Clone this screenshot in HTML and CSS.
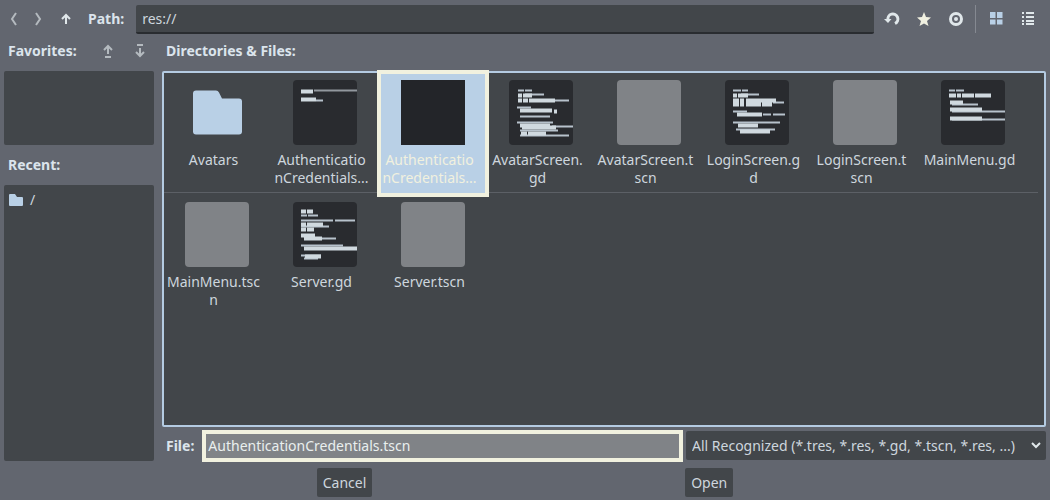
FILE: index.html
```html
<!DOCTYPE html>
<html lang="en">
<head>
<meta charset="utf-8">
<title>Open a File</title>
<link rel="stylesheet" href="styles.css">
</head>
<body>
<form class="dialog">
  <div class="toolbar">
    <div class="nav">
      <button type="button" class="tool dim" aria-label="Back"><svg viewBox="0 0 16 16"><path class="line" d="M10 2 6 8l4 6"/></svg></button>
      <button type="button" class="tool dim" aria-label="Forward"><svg viewBox="0 0 16 16"><path class="line" d="m6 2 4 6-4 6"/></svg></button>
      <button type="button" class="tool tool-up" aria-label="Parent folder"><svg viewBox="0 0 16 16"><path class="line" d="M8 13V5M4 8l4-4 4 4"/></svg></button>
    </div>
    <label class="heading path-label" for="path">Path:</label>
    <input class="field path" id="path" type="text" value="res://">
    <div class="actions">
      <button type="button" class="tool" aria-label="Refresh"><svg viewBox="0 0 16 16"><path class="line heavy" d="M4 9a5 5 0 1 1 7 3.500"/><path class="fill" d="M0 8h7.500L4 12z"/></svg></button>
      <button type="button" class="tool" aria-label="Favorite"><svg viewBox="0 0 16 16"><path class="cream" d="m8 1 2 5 5 .5-4 3.500 1.500 5L8 12.500 3.500 15 5 10 1 6.500 6 6z"/></svg></button>
      <button type="button" class="tool" aria-label="Show hidden files"><svg viewBox="0 0 16 16"><circle class="line heavy" cx="8" cy="8" r="5.500"/><circle class="fill" cx="8" cy="8" r="2"/></svg></button>
    </div>
    <div class="views">
      <button type="button" class="tool" aria-label="Thumbnails"><svg viewBox="0 0 16 16"><path class="blue" d="M2 1h5.500v6H2zM9 1h5.500v6H9zM2 8.500h5.500v5H2zM9 8.500h5.500v5H9z"/></svg></button>
      <button type="button" class="tool" aria-label="List"><svg viewBox="0 0 16 16"><path class="fill" d="M2 1h2v2H2zM6 1h8v2H6zM2 5h2v2H2zM6 5h8v2H6zM2 9h2v2H2zM6 9h8v2H6zM2 12h2v2H2zM6 12h8v2H6z"/></svg></button>
    </div>
  </div>

  <div class="main">
    <aside class="side">
      <div class="head">
        <h2 class="heading grow">Favorites:</h2>
        <button type="button" class="tool dim" aria-label="Move up"><svg viewBox="0 0 16 16"><path class="line" d="M8 11V3M4 7l4-4 4 4M5 14h6"/></svg></button>
        <button type="button" class="tool dim" aria-label="Move down"><svg viewBox="0 0 16 16"><path class="line" d="M8 5v8M4 9l4 4 4-4M5 2h6"/></svg></button>
      </div>
      <div class="panel favorites"></div>
      <div class="head recent-head"><h2 class="heading">Recent:</h2></div>
      <ul class="panel recent">
        <li><svg class="mini" viewBox="0 0 16 16"><path class="blue" d="M1 3q0-1 1-1h5l2 3h5q1 0 1 1v7q0 1-1 1H2q-1 0-1-1z"/></svg>/</li>
      </ul>
    </aside>

    <section class="content">
      <div class="head"><h2 class="heading">Directories &amp; Files:</h2></div>
      <div class="files">
        <ul class="row first">
          <li class="file"><svg class="thumb" viewBox="0 0 64 64"><path class="blue" d="M8 13q0-3 3-3h20q2 0 3 2l3 6h17q3 0 3 3v30q0 3-3 3H11q-3 0-3-3z"/></svg><span class="name">Avatars</span></li>
          <li class="file"><svg class="thumb code" viewBox="0 0 64 64"><path class="thick" d="M8 11h12M8 19h15"/><path d="M23 20h7"/><path class="thin" d="M21 10h43"/></svg><span class="name">Authenticatio<br>nCredentials...</span></li>
          <li class="file selected"><span class="thumb black"></span><span class="name">Authenticatio<br>nCredentials...</span></li>
          <li class="file"><svg class="thumb code" viewBox="0 0 64 64"><path d="M9 10h6m1 0h7M16 14h19M46 20h14M8 27h14M11 36h30M8 42h36M43 46h21M11 50h38M11 55h49"/><path class="thick" d="M9 15h4m1 0h9M9 20h4m1 0h5m1 0h26M11 30h32m2 1h3M11 45h30M13 47h34M12 53h6m1 0h18"/></svg><span class="name">AvatarScreen.<br>gd</span></li>
          <li class="file"><span class="thumb gray"></span><span class="name">AvatarScreen.t<br>scn</span></li>
          <li class="file"><svg class="thumb code" viewBox="0 0 64 64"><path d="M8 10h8m1 0h6M16 14h18M48 22h11M8 31h14M38 34h8m2 0h12M8 42h47M11 49h39"/><path class="thick" d="M8 15h4m1 0h10M8 20h6m1 0h4m2 0h30M8 24h6m1 0h4m2 0h15m1 0h10M12 34h25M13 45h20M15 51h30"/></svg><span class="name">LoginScreen.g<br>d</span></li>
          <li class="file"><span class="thumb gray"></span><span class="name">LoginScreen.t<br>scn</span></li>
          <li class="file"><svg class="thumb code" viewBox="0 0 64 64"><path d="M8 10h6m1 0h8M11 24h26M11 31h53M11 39h53"/><path class="thick" d="M8 15h7m1 0h4m1 0h12m1 0h16M9 22h13M9 29h32M9 38h32"/></svg><span class="name">MainMenu.gd</span></li>
        </ul>
        <ul class="row">
          <li class="file"><span class="thumb gray"></span><span class="name">MainMenu.tsc<br>n</span></li>
          <li class="file"><svg class="thumb code" viewBox="0 0 64 64"><path d="M8 13h6m1 0h10M8 18h32m2 0h20M8 24h28M11 36h32M8 43h42M8 53h20M11 56h14"/><path class="thick" d="M8 9h5m1 0h6M8 22h5m1 0h16M8 27h5m1 0h7M8 33h14M11 36h18M11 46h53M12 54h16"/></svg><span class="name">Server.gd</span></li>
          <li class="file"><span class="thumb gray"></span><span class="name">Server.tscn</span></li>
        </ul>
      </div>
      <div class="file-row">
        <label class="heading" for="name">File:</label>
        <input class="field filename" id="name" type="text" value="AuthenticationCredentials.tscn">
        <div class="filter">
          <select aria-label="File type"><option>All Recognized (*.tres, *.res, *.gd, *.tscn, *.res, ...)</option></select>
          <svg class="chevron" viewBox="0 0 16 16"><path class="line" d="m4 6 4 4 4-4"/></svg>
        </div>
      </div>
    </section>
  </div>

  <div class="buttons">
    <button type="button" class="button">Cancel</button>
    <button type="submit" class="button">Open</button>
  </div>
</form>
</body>
</html>
```

FILE: styles.css
```css
* {
  box-sizing: border-box;
}

body {
  margin: 0;
  background: #62666f;
  color: #ced6de;
  font: 14px/18px "Noto Sans", sans-serif;
}

button, input, select {
  font: inherit;
  color: inherit;
  border: 0;
  margin: 0;
}

ul, h2 {
  margin: 0;
  padding: 0;
  list-style: none;
}

.dialog {
  min-height: 100vh;
  display: flex;
  flex-direction: column;
  padding: 4px 4px 3px;
}

.heading {
  font-size: 14px;
  font-weight: 700;
  color: #dbe4ec;
}

.toolbar {
  display: flex;
  align-items: center;
  height: 30px;
}

.nav {
  display: flex;
  margin-left: -2px;
}

.tool {
  width: 24px;
  height: 24px;
  padding: 4px;
  background: none;
}

.tool svg {
  display: block;
  width: 16px;
  height: 16px;
}

.tool-up {
  margin-left: 4px;
}

.dim {
  opacity: 0.65;
}

.line {
  fill: none;
  stroke: #e0e7ea;
  stroke-width: 2;
}

.heavy {
  stroke-width: 3;
}

.fill {
  fill: #e0e7ea;
}

.cream {
  fill: #f0f0e0;
}

.blue {
  fill: #b9d0e6;
}

.path-label {
  margin: 0 12px 0 10px;
}

.field {
  flex: 1;
  min-width: 0;
  height: 29px;
  padding: 0 6px;
  border-radius: 2px;
  background: #42464a;
}

.path {
  border-bottom: 2px solid #292c30;
}

.actions, .views {
  display: flex;
  gap: 8px;
}

.actions {
  padding: 0 7px 0 6px;
}

.views {
  align-items: center;
  height: 28px;
  padding: 0 6px 0 8px;
  border-left: 1px solid #858991;
}

.main {
  flex: 1;
  display: grid;
  grid-template-columns: 150px minmax(0, 1fr);
  gap: 8px;
}

.side, .content {
  display: flex;
  flex-direction: column;
}

.head {
  display: flex;
  align-items: center;
  gap: 8px;
  height: 37px;
  padding: 0 2px 4px 4px;
}

.grow {
  flex: 1;
}

.panel {
  border-radius: 2px;
  background: #42464a;
}

.favorites {
  height: 74px;
}

.recent-head {
  height: 40px;
  padding-bottom: 0;
}

.recent {
  flex: 1;
  margin-bottom: 1px;
  padding: 6px 4px;
}

.recent li {
  display: flex;
  align-items: center;
  gap: 6px;
}

.mini {
  width: 16px;
  height: 16px;
}

.files {
  flex: 1;
  border: 2px solid #b4cbe2;
  border-radius: 2px;
  background: #42464a;
}

.row {
  display: flex;
  flex-wrap: wrap;
  gap: 2px;
  margin-right: 6px;
}

.first {
  margin-bottom: 2px;
  border-bottom: 1px solid #5c6066;
}

.file {
  position: relative;
  width: 106px;
  height: 119px;
  padding-top: 7px;
  display: flex;
  flex-direction: column;
  align-items: center;
  gap: 6px;
}

.thumb {
  width: 64px;
  height: 65px;
  border-radius: 4px;
}

.gray {
  background: #808387;
}

.black {
  border-radius: 0;
  background: #232529;
}

.code {
  background: #292b2f;
}

.code path {
  stroke: #b7c2cc;
  stroke-width: 2;
}

.code .thick {
  stroke: #d0d9df;
  stroke-width: 4;
}

.code .thin {
  stroke: #92989e;
}

.name {
  align-self: stretch;
  padding-right: 7px;
  text-align: center;
  white-space: nowrap;
}

.selected {
  z-index: 1;
  color: #f1f1df;
}

.selected::before {
  content: "";
  position: absolute;
  z-index: -1;
  inset: -3px -3px -5px;
  border: 4px solid #f1f1df;
  background: #b9d0e6;
}

.file-row {
  display: flex;
  align-items: center;
  gap: 8px;
  height: 33px;
  margin-top: 2px;
  padding-left: 4px;
}

.filename {
  height: 32px;
  padding: 0 2px;
  border: 4px solid #f1f1df;
  border-radius: 0;
  background: #808387;
  color: #e9efee;
}

.filter {
  position: relative;
  width: 360px;
  margin-left: -5px;
}

.filter select {
  display: block;
  width: 100%;
  height: 29px;
  padding: 0 28px 0 6px;
  border-radius: 2px;
  background: #42464a;
  appearance: none;
}

.chevron {
  position: absolute;
  right: 2px;
  top: 6px;
  width: 16px;
  height: 16px;
  pointer-events: none;
}

.buttons {
  display: flex;
  justify-content: space-evenly;
  padding-top: 6px;
}

.button {
  height: 29px;
  padding: 0 6px;
  border-radius: 2px;
  background: #42464a;
}
```
